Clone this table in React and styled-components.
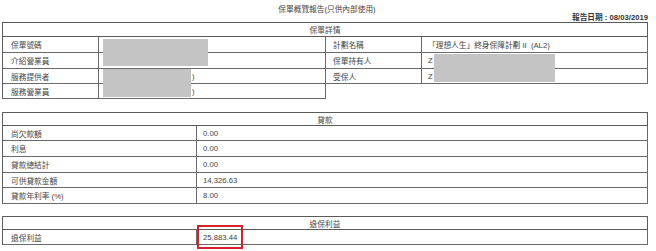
import React from "react";
import styled, { createGlobalStyle } from "styled-components";

const Global = createGlobalStyle`
  html, body { margin: 0; padding: 0; background: #fff; }
  body {
    font-family: "Liberation Sans", "Noto Sans CJK TC", sans-serif;
    font-size: 7.7px;
    color: #444;
  }
`;

const Page = styled.div`
  width: 656px;
  height: 251px;
  box-sizing: border-box;
  padding: 0 8px 0 2px;
  display: flex;
  flex-direction: column;
  overflow: hidden;
`;

const Title = styled.div`
  margin-top: 4px;
  line-height: 11px;
  text-align: center;
  padding-left: 4px;
`;

const DateLine = styled.div`
  line-height: 5px;
  margin-bottom: 2px;
  text-align: right;
  font-weight: bold;
  color: #333;
`;

const Grid = styled.div`
  position: relative;
  display: grid;
  grid-template-columns: ${(p) => p.$cols};
  grid-template-rows: ${(p) => p.$rows};
  margin-top: ${(p) => p.$gap || 0}px;
`;

const Head = styled.div`
  grid-column: 1 / -1;
  border: 1px solid #5a5a5a;
  display: flex;
  align-items: center;
  justify-content: center;
  box-sizing: border-box;
`;

const Cell = styled.div`
  box-sizing: border-box;
  border-right: 1px solid #6a6a6a;
  border-bottom: 1px solid #6a6a6a;
  border-left: ${(p) => (p.$first ? "1px solid #5a5a5a" : "none")};
  display: flex;
  align-items: center;
  padding-left: ${(p) => p.$pad}px;
  white-space: nowrap;
  position: relative;
`;

const Blank = styled.div``;

const Redact = styled.div`
  position: absolute;
  background: #c4c4c4;
`;

const Highlight = styled.div`
  position: absolute;
  left: 0;
  top: -5px;
  width: 46px;
  height: 24px;
  box-sizing: border-box;
  border: 2px solid #d4212b;
`;

export default function App() {
  const loan = [
    ["尚欠款額", "0.00"],
    ["利息", "0.00"],
    ["貸款總結計", "0.00"],
    ["可供貸款金額", "14,326.63"],
    ["貸款年利率 (%)", "8.00"],
  ];
  return (
    <>
      <Global />
      <Page>
        <Title>保單概覽報告(只供內部使用)</Title>
        <DateLine>報告日期 : 08/03/2019</DateLine>

        <Grid $cols="97px 227px 96px 1fr" $rows="15px 16px 16px 15px 15px">
          <Head>保單詳情</Head>
          <Cell $first $pad={8}>保單號碼</Cell>
          <Cell $pad={4}></Cell>
          <Cell $pad={7}>計劃名稱</Cell>
          <Cell $pad={6}>「理想人生」終身保障計劃 II&nbsp;&nbsp;(AL2)</Cell>
          <Cell $first $pad={8}>介紹營業員</Cell>
          <Cell $pad={4}></Cell>
          <Cell $pad={7}>保單持有人</Cell>
          <Cell $pad={6}>Z</Cell>
          <Cell $first $pad={8}>服務提供者</Cell>
          <Cell $pad={93}>)</Cell>
          <Cell $pad={7}>受保人</Cell>
          <Cell $pad={6}>Z</Cell>
          <Cell $first $pad={8}>服務營業員</Cell>
          <Cell $pad={93}>)</Cell>
          <Blank />
          <Blank />
          <Redact style={{ left: 101, top: 17, width: 105, height: 27 }} />
          <Redact style={{ left: 101, top: 47, width: 88, height: 28 }} />
          <Redact style={{ left: 432, top: 32, width: 121, height: 28 }} />
        </Grid>

        <Grid $gap={13} $cols="195px 1fr" $rows="14px 15px 16px 16px 15px 16px">
          <Head>貸款</Head>
          {loan.map(([k, v]) => (
            <React.Fragment key={k}>
              <Cell $first $pad={8}>{k}</Cell>
              <Cell $pad={6}>{v}</Cell>
            </React.Fragment>
          ))}
        </Grid>

        <Grid $gap={12} $cols="195px 1fr" $rows="14px 15px">
          <Head>退保利益</Head>
          <Cell $first $pad={8}>退保利益</Cell>
          <Cell $pad={6}>
            25,883.44
            <Highlight />
          </Cell>
        </Grid>
      </Page>
    </>
  );
}
